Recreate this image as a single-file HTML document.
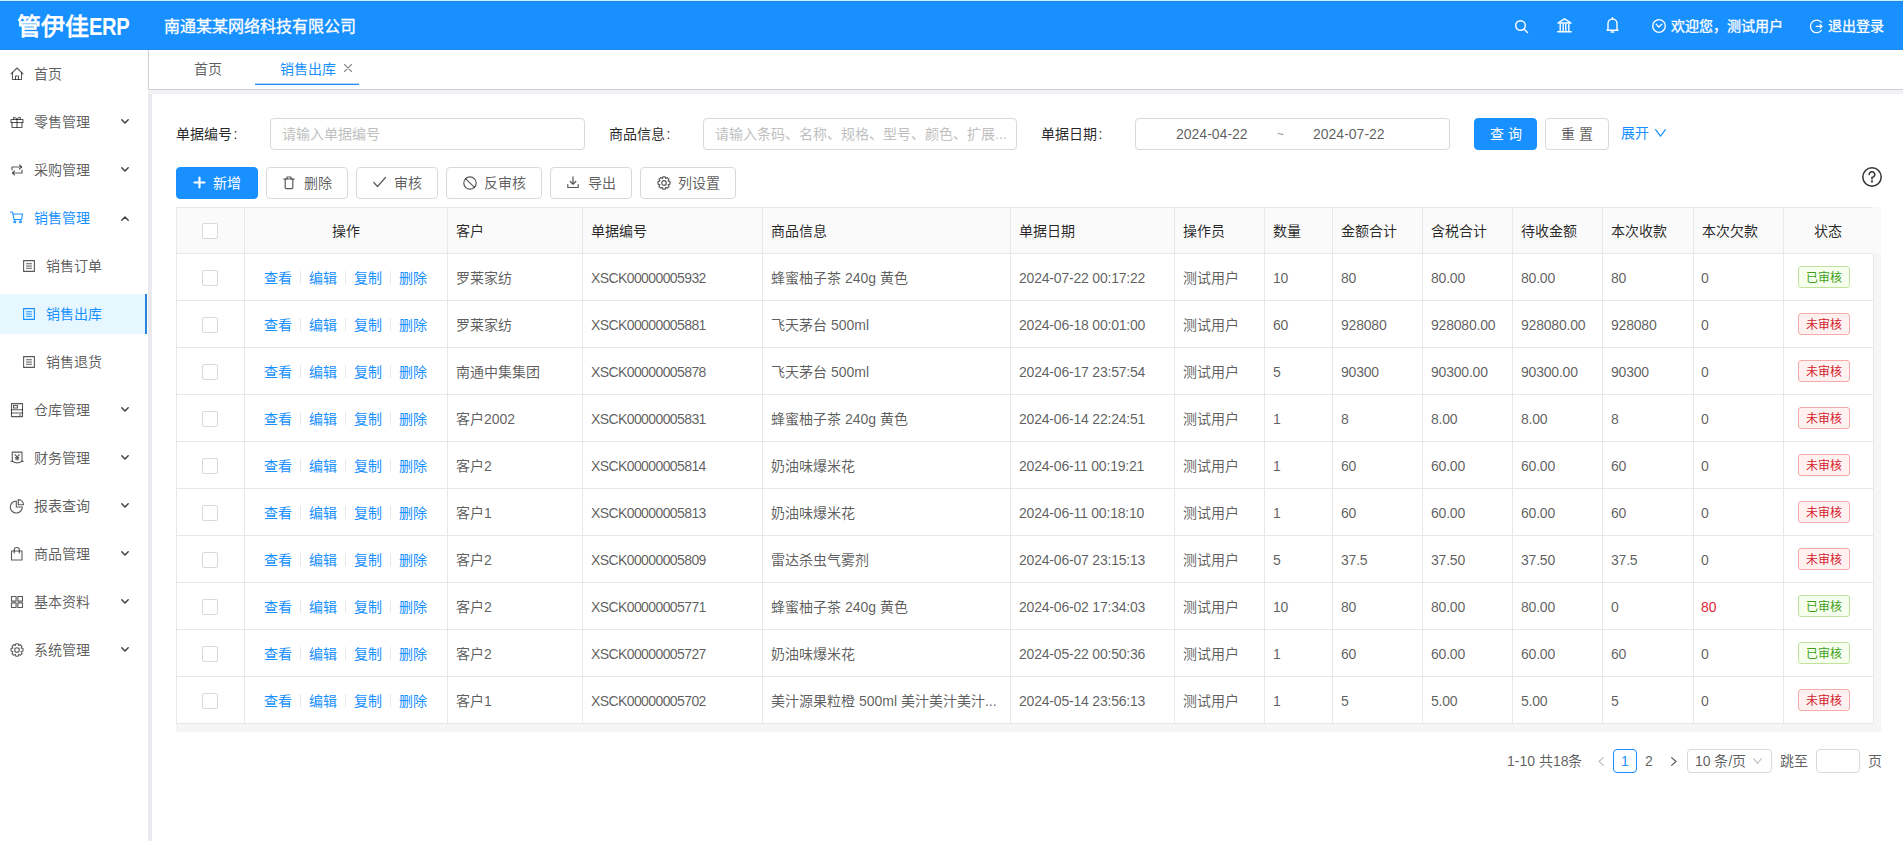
<!DOCTYPE html>
<html lang="zh-CN"><head><meta charset="utf-8"><title>管伊佳ERP</title><style>
*{margin:0;padding:0;box-sizing:border-box}
html,body{width:1903px;height:841px;overflow:hidden;background:#fff}
body{position:relative;font-family:"Liberation Sans",sans-serif;font-size:14px;color:rgba(0,0,0,.65)}
.a{position:absolute}
.t{position:absolute;white-space:nowrap;line-height:20px}
svg{position:absolute;overflow:visible}
.hdr{left:0;top:0;width:1903px;height:50px;background:#1890ff}
.side{left:0;top:50px;width:148px;height:791px;background:#fff}
.btn{position:absolute;height:32px;border:1px solid #d9d9d9;border-radius:4px;background:#fff;color:rgba(0,0,0,.65)}
.inp{position:absolute;height:32px;border:1px solid #d9d9d9;border-radius:4px;background:#fff}
.vl{position:absolute;width:1px;background:#e8e8e8}
.hl{position:absolute;height:1px;background:#e8e8e8}
.tag{position:absolute;height:22px;width:52px;border:1px solid;border-radius:3px;font-size:12px;line-height:22px;text-align:center}
.g{color:#3f9e1a;background:#f6ffed;border-color:#bfe39a}
.r{color:#d4202c;background:#fff1f0;border-color:#f3aaaa}
.lk{color:#1890ff}
</style></head><body>
<div class="a hdr"></div>
<div class="a" style="left:0;top:0;width:1903px;height:1px;background:#c4f4ff"></div>
<div class="a" style="left:0;top:1px;width:1903px;height:1px;background:#2c86dc"></div>
<div class="a" style="left:0;top:49px;width:1903px;height:1px;background:#1e8ae6"></div>
<div class="t" style="left:17px;top:16.5px;font-size:24px;color:#fff;font-weight:bold;">管伊佳<span style="display:inline-block;transform:scaleX(0.84);transform-origin:0 50%;letter-spacing:-0.5px">ERP</span></div>
<div class="t" style="left:164px;top:17.0px;font-size:16px;color:#fff;-webkit-text-stroke:0.3px #fff;">南通某某网络科技有限公司</div>
<svg style="left:1515px;top:20px;color:#fff;" width="13" height="13" viewBox="0 0 13 13" fill="none" stroke="currentColor" stroke-width="1.4" stroke-linecap="round" stroke-linejoin="round"><circle cx="5.5" cy="5.5" r="4.8"/><path d="M9 9 L12.5 12.5"/></svg>
<svg style="left:1557px;top:18px;color:#fff;" width="15" height="15" viewBox="0 0 15 15" fill="none" stroke="currentColor" stroke-width="1.4" stroke-linecap="round" stroke-linejoin="round"><path d="M1 5 L7.5 0.8 L14 5 Z"/><path d="M3.2 6.5 V12.5 M6.2 6.5 V12.5 M8.8 6.5 V12.5 M11.8 6.5 V12.5"/><path d="M0.8 13.8 H14.2"/></svg>
<svg style="left:1606px;top:17px;color:#fff;" width="13" height="16" viewBox="0 0 13 16" fill="none" stroke="currentColor" stroke-width="1.4" stroke-linecap="round" stroke-linejoin="round"><path d="M6.5 0.8 V2"/><path d="M2 13 V6.5 A4.5 4.5 0 0 1 11 6.5 V13"/><path d="M1 13.2 H12"/><path d="M5.2 15 H7.8"/></svg>
<svg style="left:1652px;top:19px;color:#fff;" width="14" height="14" viewBox="0 0 14 14" fill="none" stroke="currentColor" stroke-width="1.3" stroke-linecap="round" stroke-linejoin="round"><circle cx="7" cy="7" r="6.3"/><path d="M4.2 5.3 L6.8 8.1 L9.8 5.3"/></svg>
<div class="t" style="left:1671px;top:16.0px;font-size:14px;color:#fff;-webkit-text-stroke:0.3px #fff;">欢迎您，测试用户</div>
<svg style="left:1810px;top:20px;color:#fff;" width="13" height="13" viewBox="0 0 13 13" fill="none" stroke="currentColor" stroke-width="1.3" stroke-linecap="round" stroke-linejoin="round"><path d="M11.4 2.4 A6.2 6.2 0 1 0 11.4 10.4"/><path d="M6.2 6.4 H12 M10.2 4.7 L12 6.4 L10.2 8.1"/></svg>
<div class="t" style="left:1828px;top:16.0px;font-size:14px;color:#fff;-webkit-text-stroke:0.3px #fff;">退出登录</div>
<div class="a" style="left:0;top:294px;width:145px;height:40px;background:#e6f7ff"></div>
<div class="a" style="left:145px;top:294px;width:2px;height:40px;background:#2a84dc"></div>
<svg style="left:10px;top:67px;color:rgba(0,0,0,.65);" width="14" height="14" viewBox="0 0 14 14" fill="none" stroke="currentColor" stroke-width="1.1" stroke-linecap="round" stroke-linejoin="round"><path d="M1 6.8 L7 1 L13 6.8"/><path d="M2.5 5.5 V12.5 H11.5 V5.5"/><path d="M5.5 12.5 V9 H8.5 V12.5"/></svg>
<div class="t" style="left:34px;top:64.0px;font-size:14px;color:rgba(0,0,0,.65);">首页</div>
<svg style="left:10px;top:115px;color:rgba(0,0,0,.65);" width="14" height="14" viewBox="0 0 14 14" fill="none" stroke="currentColor" stroke-width="1.1" stroke-linecap="round" stroke-linejoin="round"><rect x="1" y="4.5" width="12" height="3" /><path d="M2 7.5 V12.5 H12 V7.5"/><path d="M7 4.5 V12.5"/><path d="M7 4.5 C5 1 2.5 2 4 4.5 M7 4.5 C9 1 11.5 2 10 4.5"/></svg>
<div class="t" style="left:34px;top:112.0px;font-size:14px;color:rgba(0,0,0,.65);">零售管理</div>
<svg style="left:121px;top:119px;color:rgba(0,0,0,.75);" width="8" height="5" viewBox="0 0 8 5" fill="none" stroke="currentColor" stroke-width="1.5" stroke-linecap="round" stroke-linejoin="round"><path d="M0.8 0.8 L4 4 L7.2 0.8"/></svg>
<svg style="left:10px;top:163px;color:rgba(0,0,0,.65);" width="14" height="14" viewBox="0 0 14 14" fill="none" stroke="currentColor" stroke-width="1.1" stroke-linecap="round" stroke-linejoin="round"><path d="M2 7 V4 H11.5"/><path d="M9.5 2 L11.5 4 L9.5 6" /><path d="M12 7 V10 H2.5"/><path d="M4.5 8 L2.5 10 L4.5 12"/></svg>
<div class="t" style="left:34px;top:160.0px;font-size:14px;color:rgba(0,0,0,.65);">采购管理</div>
<svg style="left:121px;top:167px;color:rgba(0,0,0,.75);" width="8" height="5" viewBox="0 0 8 5" fill="none" stroke="currentColor" stroke-width="1.5" stroke-linecap="round" stroke-linejoin="round"><path d="M0.8 0.8 L4 4 L7.2 0.8"/></svg>
<svg style="left:10px;top:211px;color:#1890ff;" width="14" height="14" viewBox="0 0 14 14" fill="none" stroke="currentColor" stroke-width="1.1" stroke-linecap="round" stroke-linejoin="round"><path d="M0.5 1 H2.5 L4 8.5 H11.5 L12.5 3 H3"/><circle cx="4.8" cy="10.8" r="1"/><circle cx="10.5" cy="10.8" r="1"/></svg>
<div class="t" style="left:34px;top:208.0px;font-size:14px;color:#1890ff;">销售管理</div>
<svg style="left:121px;top:215.5px;color:rgba(0,0,0,.75);" width="8" height="5" viewBox="0 0 8 5" fill="none" stroke="currentColor" stroke-width="1.5" stroke-linecap="round" stroke-linejoin="round"><path d="M0.8 4.2 L4 1 L7.2 4.2"/></svg>
<svg style="left:23px;top:260px;color:rgba(0,0,0,.65);" width="12" height="12" viewBox="0 0 12 12" fill="none" stroke="currentColor" stroke-width="1.1" stroke-linecap="round" stroke-linejoin="round"><rect x="0.6" y="0.6" width="10.8" height="10.8"/><path d="M3.5 3.8 H8.5 M3.5 6 H8.5 M3.5 8.2 H8.5"/></svg>
<div class="t" style="left:46px;top:256.0px;font-size:14px;color:rgba(0,0,0,.65);">销售订单</div>
<svg style="left:23px;top:308px;color:#1890ff;" width="12" height="12" viewBox="0 0 12 12" fill="none" stroke="currentColor" stroke-width="1.1" stroke-linecap="round" stroke-linejoin="round"><rect x="0.6" y="0.6" width="10.8" height="10.8"/><path d="M3.5 3.8 H8.5 M3.5 6 H8.5 M3.5 8.2 H8.5"/></svg>
<div class="t" style="left:46px;top:304.0px;font-size:14px;color:#1890ff;">销售出库</div>
<svg style="left:23px;top:356px;color:rgba(0,0,0,.65);" width="12" height="12" viewBox="0 0 12 12" fill="none" stroke="currentColor" stroke-width="1.1" stroke-linecap="round" stroke-linejoin="round"><rect x="0.6" y="0.6" width="10.8" height="10.8"/><path d="M3.5 3.8 H8.5 M3.5 6 H8.5 M3.5 8.2 H8.5"/></svg>
<div class="t" style="left:46px;top:352.0px;font-size:14px;color:rgba(0,0,0,.65);">销售退货</div>
<svg style="left:10px;top:403px;color:rgba(0,0,0,.65);" width="14" height="14" viewBox="0 0 14 14" fill="none" stroke="currentColor" stroke-width="1.1" stroke-linecap="round" stroke-linejoin="round"><rect x="1.5" y="0.6" width="11" height="13"/><rect x="3.5" y="2.5" width="4" height="2.5"/><path d="M1.5 6.8 H12.5 M1.5 10 H12.5"/><path d="M9.5 12 H10.8"/></svg>
<div class="t" style="left:34px;top:400.0px;font-size:14px;color:rgba(0,0,0,.65);">仓库管理</div>
<svg style="left:121px;top:407px;color:rgba(0,0,0,.75);" width="8" height="5" viewBox="0 0 8 5" fill="none" stroke="currentColor" stroke-width="1.5" stroke-linecap="round" stroke-linejoin="round"><path d="M0.8 0.8 L4 4 L7.2 0.8"/></svg>
<svg style="left:10px;top:451px;color:rgba(0,0,0,.65);" width="14" height="14" viewBox="0 0 14 14" fill="none" stroke="currentColor" stroke-width="1.1" stroke-linecap="round" stroke-linejoin="round"><path d="M2.3 10.1 V1.1 H12 V10.1"/><path d="M0.9 10.2 H2.3 Q7.2 13.6 12 10.2 H13.3"/><path d="M5 3.6 L7.15 5.9 L9.3 3.6 M7.15 5.9 V9 M5.5 6.6 H8.8 M5.5 8 H8.8"/></svg>
<div class="t" style="left:34px;top:448.0px;font-size:14px;color:rgba(0,0,0,.65);">财务管理</div>
<svg style="left:121px;top:455px;color:rgba(0,0,0,.75);" width="8" height="5" viewBox="0 0 8 5" fill="none" stroke="currentColor" stroke-width="1.5" stroke-linecap="round" stroke-linejoin="round"><path d="M0.8 0.8 L4 4 L7.2 0.8"/></svg>
<svg style="left:10px;top:499px;color:rgba(0,0,0,.65);" width="14" height="14" viewBox="0 0 14 14" fill="none" stroke="currentColor" stroke-width="1.1" stroke-linecap="round" stroke-linejoin="round"><path d="M6.3 2 A6 6 0 1 0 12.3 8 H6.3 Z"/><path d="M8.3 0.6 A5.4 5.4 0 0 1 13.5 5.8 H8.3 Z"/></svg>
<div class="t" style="left:34px;top:496.0px;font-size:14px;color:rgba(0,0,0,.65);">报表查询</div>
<svg style="left:121px;top:503px;color:rgba(0,0,0,.75);" width="8" height="5" viewBox="0 0 8 5" fill="none" stroke="currentColor" stroke-width="1.5" stroke-linecap="round" stroke-linejoin="round"><path d="M0.8 0.8 L4 4 L7.2 0.8"/></svg>
<svg style="left:10px;top:547px;color:rgba(0,0,0,.65);" width="14" height="14" viewBox="0 0 14 14" fill="none" stroke="currentColor" stroke-width="1.1" stroke-linecap="round" stroke-linejoin="round"><rect x="1.5" y="4" width="10.5" height="9"/><path d="M4.2 6 V3 A2.5 2.5 0 0 1 9.3 3 V6"/></svg>
<div class="t" style="left:34px;top:544.0px;font-size:14px;color:rgba(0,0,0,.65);">商品管理</div>
<svg style="left:121px;top:551px;color:rgba(0,0,0,.75);" width="8" height="5" viewBox="0 0 8 5" fill="none" stroke="currentColor" stroke-width="1.5" stroke-linecap="round" stroke-linejoin="round"><path d="M0.8 0.8 L4 4 L7.2 0.8"/></svg>
<svg style="left:10px;top:595px;color:rgba(0,0,0,.65);" width="14" height="14" viewBox="0 0 14 14" fill="none" stroke="currentColor" stroke-width="1.1" stroke-linecap="round" stroke-linejoin="round"><rect x="1.5" y="1.5" width="4.6" height="4.6"/><rect x="7.9" y="1.5" width="4.6" height="4.6"/><rect x="1.5" y="7.9" width="4.6" height="4.6"/><rect x="7.9" y="7.9" width="4.6" height="4.6"/></svg>
<div class="t" style="left:34px;top:592.0px;font-size:14px;color:rgba(0,0,0,.65);">基本资料</div>
<svg style="left:121px;top:599px;color:rgba(0,0,0,.75);" width="8" height="5" viewBox="0 0 8 5" fill="none" stroke="currentColor" stroke-width="1.5" stroke-linecap="round" stroke-linejoin="round"><path d="M0.8 0.8 L4 4 L7.2 0.8"/></svg>
<svg style="left:10px;top:643px;color:rgba(0,0,0,.65);" width="14" height="14" viewBox="0 0 14 14" fill="none" stroke="currentColor" stroke-width="1.1" stroke-linecap="round" stroke-linejoin="round"><circle cx="7" cy="7" r="2.3"/><path d="M5.8 0.8 H8.2 L8.7 2.5 L10.3 1.6 L12 3.3 L11.1 4.9 L13 5.6 V8.1 L11.1 8.8 L12.1 10.5 L10.4 12.2 L8.7 11.4 L8.2 13.2 H5.8 L5.3 11.4 L3.6 12.2 L1.9 10.5 L2.9 8.8 L1 8.1 V5.6 L2.9 4.9 L2 3.3 L3.7 1.6 L5.3 2.5 Z"/></svg>
<div class="t" style="left:34px;top:640.0px;font-size:14px;color:rgba(0,0,0,.65);">系统管理</div>
<svg style="left:121px;top:647px;color:rgba(0,0,0,.75);" width="8" height="5" viewBox="0 0 8 5" fill="none" stroke="currentColor" stroke-width="1.5" stroke-linecap="round" stroke-linejoin="round"><path d="M0.8 0.8 L4 4 L7.2 0.8"/></svg>
<div class="a" style="left:148px;top:50px;width:1px;height:40px;background:#d0d0d0"></div>
<div class="a" style="left:148px;top:89px;width:1755px;height:752px;background:#f0f2f5"></div>
<div class="a" style="left:148px;top:89px;width:1755px;height:1px;background:#d0d0d0"></div>
<div class="a" style="left:152px;top:94px;width:1751px;height:747px;background:#fff"></div>
<div class="a" style="left:148px;top:94px;width:4px;height:747px;background:#eaeaee"></div>
<div class="t" style="left:194px;top:59.0px;font-size:14px;color:rgba(0,0,0,.65);">首页</div>
<div class="t" style="left:280px;top:59.0px;font-size:14px;color:#1890ff;">销售出库</div>
<svg style="left:344px;top:64px;color:rgba(0,0,0,.45);" width="8" height="8" viewBox="0 0 8 8" fill="none" stroke="currentColor" stroke-width="1.1" stroke-linecap="round" stroke-linejoin="round"><path d="M0.5 0.5 L7.5 7.5 M7.5 0.5 L0.5 7.5"/></svg>
<div class="a" style="left:255px;top:84px;width:104px;height:1px;background:#2a88e8"></div>
<div class="a" style="left:255px;top:83px;width:104px;height:1px;background:rgba(24,144,255,.35)"></div>
<div class="t" style="left:176px;top:124.0px;font-size:14px;color:rgba(0,0,0,.85);">单据编号<span style="margin-left:1.5px">:</span></div>
<div class="inp" style="left:270px;top:118px;width:315px"></div>
<div class="t" style="left:282px;top:124.0px;font-size:14px;color:#bfbfbf;">请输入单据编号</div>
<div class="t" style="left:609px;top:124.0px;font-size:14px;color:rgba(0,0,0,.85);">商品信息<span style="margin-left:1.5px">:</span></div>
<div class="inp" style="left:703px;top:118px;width:314px"></div>
<div class="t" style="left:715px;top:124.0px;font-size:14px;color:#bfbfbf;">请输入条码、名称、规格、型号、颜色、扩展...</div>
<div class="t" style="left:1041px;top:124.0px;font-size:14px;color:rgba(0,0,0,.85);">单据日期<span style="margin-left:1.5px">:</span></div>
<div class="inp" style="left:1135px;top:118px;width:315px"></div>
<div class="t" style="left:1176px;top:124.0px;font-size:14px;color:rgba(0,0,0,.65);">2024-04-22</div>
<div class="t" style="left:1277px;top:124.0px;font-size:12px;color:rgba(0,0,0,.45);">~</div>
<div class="t" style="left:1313px;top:124.0px;font-size:14px;color:rgba(0,0,0,.65);">2024-07-22</div>
<div class="btn" style="left:1474px;top:118px;width:63px;background:#1890ff;border-color:#1890ff"></div>
<div class="t" style="left:1490px;top:124.0px;font-size:14px;color:#fff;">查 询</div>
<div class="btn" style="left:1545px;top:118px;width:64px"></div>
<div class="t" style="left:1561px;top:124.0px;font-size:14px;color:rgba(0,0,0,.65);">重 置</div>
<div class="t" style="left:1621px;top:123.0px;font-size:14px;color:#1890ff;">展开</div>
<svg style="left:1654.5px;top:129px;color:#1890ff;" width="11" height="8" viewBox="0 0 11 8" fill="none" stroke="currentColor" stroke-width="1.2" stroke-linecap="round" stroke-linejoin="round"><path d="M0.6 0.6 L5.5 7.2 L10.4 0.6"/></svg>
<div class="btn" style="left:176px;top:167px;width:82px;background:#1890ff;border-color:#1890ff"></div>
<svg style="left:194px;top:177px;color:#fff;" width="11" height="11" viewBox="0 0 11 11" fill="none" stroke="currentColor" stroke-width="2.1" stroke-linecap="round" stroke-linejoin="round"><path d="M5.5 0.5 V10.5 M0.5 5.5 H10.5"/></svg>
<div class="t" style="left:213px;top:173.0px;font-size:14px;color:#fff;">新增</div>
<div class="btn" style="left:266px;top:167px;width:82px"></div>
<svg style="left:283px;top:176px;color:rgba(0,0,0,.65);" width="14" height="14" viewBox="0 0 14 14" fill="none" stroke="currentColor" stroke-width="1.2" stroke-linecap="round" stroke-linejoin="round"><path d="M0.8 3 H11.2"/><path d="M4 3 V1 H8 V3"/><path d="M2.2 3 V11.5 Q2.2 12.6 3.3 12.6 H8.7 Q9.8 12.6 9.8 11.5 V3"/></svg>
<div class="t" style="left:304px;top:173.0px;font-size:14px;color:rgba(0,0,0,.65);">删除</div>
<div class="btn" style="left:356px;top:167px;width:82px"></div>
<svg style="left:373px;top:176px;color:rgba(0,0,0,.65);" width="14" height="14" viewBox="0 0 14 14" fill="none" stroke="currentColor" stroke-width="1.2" stroke-linecap="round" stroke-linejoin="round"><path d="M0.8 6.5 L4.5 10.5 L12.5 1.5"/></svg>
<div class="t" style="left:394px;top:173.0px;font-size:14px;color:rgba(0,0,0,.65);">审核</div>
<div class="btn" style="left:446px;top:167px;width:96px"></div>
<svg style="left:463px;top:176px;color:rgba(0,0,0,.65);" width="14" height="14" viewBox="0 0 14 14" fill="none" stroke="currentColor" stroke-width="1.2" stroke-linecap="round" stroke-linejoin="round"><circle cx="7" cy="7" r="6.2"/><path d="M2.6 2.6 L11.4 11.4"/></svg>
<div class="t" style="left:484px;top:173.0px;font-size:14px;color:rgba(0,0,0,.65);">反审核</div>
<div class="btn" style="left:550px;top:167px;width:82px"></div>
<svg style="left:567px;top:176px;color:rgba(0,0,0,.65);" width="14" height="14" viewBox="0 0 14 14" fill="none" stroke="currentColor" stroke-width="1.2" stroke-linecap="round" stroke-linejoin="round"><path d="M6 0.8 V8 M3.2 5.5 L6 8.2 L8.8 5.5"/><path d="M0.8 8.5 V11.5 H11.2 V8.5"/></svg>
<div class="t" style="left:588px;top:173.0px;font-size:14px;color:rgba(0,0,0,.65);">导出</div>
<div class="btn" style="left:640px;top:167px;width:96px"></div>
<svg style="left:657px;top:176px;color:rgba(0,0,0,.65);" width="14" height="14" viewBox="0 0 14 14" fill="none" stroke="currentColor" stroke-width="1.2" stroke-linecap="round" stroke-linejoin="round"><circle cx="7" cy="7" r="2.3"/><path d="M5.8 0.8 H8.2 L8.7 2.5 L10.3 1.6 L12 3.3 L11.1 4.9 L13 5.6 V8.1 L11.1 8.8 L12.1 10.5 L10.4 12.2 L8.7 11.4 L8.2 13.2 H5.8 L5.3 11.4 L3.6 12.2 L1.9 10.5 L2.9 8.8 L1 8.1 V5.6 L2.9 4.9 L2 3.3 L3.7 1.6 L5.3 2.5 Z"/></svg>
<div class="t" style="left:678px;top:173.0px;font-size:14px;color:rgba(0,0,0,.65);">列设置</div>
<svg style="left:1862px;top:167px;color:#333;" width="20" height="20" viewBox="0 0 20 20" fill="none" stroke="currentColor" stroke-width="1.5" stroke-linecap="round" stroke-linejoin="round"><circle cx="10" cy="10" r="9.2"/><path d="M7.2 7.6 A2.8 2.8 0 1 1 10 10.3 V12"/><circle cx="10" cy="14.5" r="0.4"/></svg>
<div class="a" style="left:176px;top:207px;width:1705px;height:47px;background:#fafafa"></div>
<div class="a" style="left:1873px;top:254px;width:8px;height:470px;background:#f6f6f6"></div>
<div class="a" style="left:176px;top:724px;width:1705px;height:8px;background:#f5f5f5"></div>
<div class="hl" style="left:176px;top:207px;width:1697px"></div>
<div class="hl" style="left:176px;top:253px;width:1697px"></div>
<div class="hl" style="left:176px;top:300px;width:1697px"></div>
<div class="hl" style="left:176px;top:347px;width:1697px"></div>
<div class="hl" style="left:176px;top:394px;width:1697px"></div>
<div class="hl" style="left:176px;top:441px;width:1697px"></div>
<div class="hl" style="left:176px;top:488px;width:1697px"></div>
<div class="hl" style="left:176px;top:535px;width:1697px"></div>
<div class="hl" style="left:176px;top:582px;width:1697px"></div>
<div class="hl" style="left:176px;top:629px;width:1697px"></div>
<div class="hl" style="left:176px;top:676px;width:1697px"></div>
<div class="hl" style="left:176px;top:723px;width:1697px"></div>
<div class="vl" style="left:176px;top:207px;height:517px"></div>
<div class="vl" style="left:244px;top:207px;height:517px"></div>
<div class="vl" style="left:447px;top:207px;height:517px"></div>
<div class="vl" style="left:582px;top:207px;height:517px"></div>
<div class="vl" style="left:762px;top:207px;height:517px"></div>
<div class="vl" style="left:1010px;top:207px;height:517px"></div>
<div class="vl" style="left:1174px;top:207px;height:517px"></div>
<div class="vl" style="left:1264px;top:207px;height:517px"></div>
<div class="vl" style="left:1332px;top:207px;height:517px"></div>
<div class="vl" style="left:1422px;top:207px;height:517px"></div>
<div class="vl" style="left:1512px;top:207px;height:517px"></div>
<div class="vl" style="left:1602px;top:207px;height:517px"></div>
<div class="vl" style="left:1693px;top:207px;height:517px"></div>
<div class="vl" style="left:1783px;top:207px;height:517px"></div>
<div class="vl" style="left:1873px;top:254px;height:470px"></div>
<div class="t" style="left:244px;width:203px;text-align:center;top:220.5px;color:rgba(0,0,0,.85)">操作</div>
<div class="t" style="left:456px;top:220.5px;font-size:14px;color:rgba(0,0,0,.85);">客户</div>
<div class="t" style="left:591px;top:220.5px;font-size:14px;color:rgba(0,0,0,.85);">单据编号</div>
<div class="t" style="left:771px;top:220.5px;font-size:14px;color:rgba(0,0,0,.85);">商品信息</div>
<div class="t" style="left:1019px;top:220.5px;font-size:14px;color:rgba(0,0,0,.85);">单据日期</div>
<div class="t" style="left:1183px;top:220.5px;font-size:14px;color:rgba(0,0,0,.85);">操作员</div>
<div class="t" style="left:1273px;top:220.5px;font-size:14px;color:rgba(0,0,0,.85);">数量</div>
<div class="t" style="left:1341px;top:220.5px;font-size:14px;color:rgba(0,0,0,.85);">金额合计</div>
<div class="t" style="left:1431px;top:220.5px;font-size:14px;color:rgba(0,0,0,.85);">含税合计</div>
<div class="t" style="left:1521px;top:220.5px;font-size:14px;color:rgba(0,0,0,.85);">待收金额</div>
<div class="t" style="left:1611px;top:220.5px;font-size:14px;color:rgba(0,0,0,.85);">本次收款</div>
<div class="t" style="left:1702px;top:220.5px;font-size:14px;color:rgba(0,0,0,.85);">本次欠款</div>
<div class="t" style="left:1783px;width:90px;text-align:center;top:220.5px;color:rgba(0,0,0,.85)">状态</div>
<div class="a" style="left:202px;top:223px;width:16px;height:16px;border:1px solid #d9d9d9;border-radius:2px;background:#fff"></div>
<div class="a" style="left:202px;top:270px;width:16px;height:16px;border:1px solid #d9d9d9;border-radius:2px;background:#fff"></div>
<div class="t" style="left:264px;top:268.0px;font-size:14px;color:#1890ff;">查看</div>
<div class="a" style="left:300px;top:271px;width:1px;height:13px;background:#e8e8e8"></div>
<div class="t" style="left:309px;top:268.0px;font-size:14px;color:#1890ff;">编辑</div>
<div class="a" style="left:345px;top:271px;width:1px;height:13px;background:#e8e8e8"></div>
<div class="t" style="left:354px;top:268.0px;font-size:14px;color:#1890ff;">复制</div>
<div class="a" style="left:390px;top:271px;width:1px;height:13px;background:#e8e8e8"></div>
<div class="t" style="left:399px;top:268.0px;font-size:14px;color:#1890ff;">删除</div>
<div class="t" style="left:456px;top:268.0px;font-size:14px;color:rgba(0,0,0,.65);">罗莱家纺</div>
<div class="t" style="left:591px;top:268.0px;font-size:14px;color:rgba(0,0,0,.65);letter-spacing:-0.6px;">XSCK00000005932</div>
<div class="t" style="left:771px;top:268.0px;font-size:14px;color:rgba(0,0,0,.65);">蜂蜜柚子茶 240g 黄色</div>
<div class="t" style="left:1019px;top:268.0px;font-size:14px;color:rgba(0,0,0,.65);letter-spacing:-0.2px;">2024-07-22 00:17:22</div>
<div class="t" style="left:1183px;top:268.0px;font-size:14px;color:rgba(0,0,0,.65);">测试用户</div>
<div class="t" style="left:1273px;top:268.0px;font-size:14px;color:rgba(0,0,0,.65);letter-spacing:-0.2px;">10</div>
<div class="t" style="left:1341px;top:268.0px;font-size:14px;color:rgba(0,0,0,.65);letter-spacing:-0.2px;">80</div>
<div class="t" style="left:1431px;top:268.0px;font-size:14px;color:rgba(0,0,0,.65);letter-spacing:-0.2px;">80.00</div>
<div class="t" style="left:1521px;top:268.0px;font-size:14px;color:rgba(0,0,0,.65);letter-spacing:-0.2px;">80.00</div>
<div class="t" style="left:1611px;top:268.0px;font-size:14px;color:rgba(0,0,0,.65);letter-spacing:-0.2px;">80</div>
<div class="t" style="left:1701px;top:268.0px;font-size:14px;color:rgba(0,0,0,.65);letter-spacing:-0.2px;">0</div>
<div class="tag g" style="left:1798px;top:266px">已审核</div>
<div class="a" style="left:202px;top:317px;width:16px;height:16px;border:1px solid #d9d9d9;border-radius:2px;background:#fff"></div>
<div class="t" style="left:264px;top:315.0px;font-size:14px;color:#1890ff;">查看</div>
<div class="a" style="left:300px;top:318px;width:1px;height:13px;background:#e8e8e8"></div>
<div class="t" style="left:309px;top:315.0px;font-size:14px;color:#1890ff;">编辑</div>
<div class="a" style="left:345px;top:318px;width:1px;height:13px;background:#e8e8e8"></div>
<div class="t" style="left:354px;top:315.0px;font-size:14px;color:#1890ff;">复制</div>
<div class="a" style="left:390px;top:318px;width:1px;height:13px;background:#e8e8e8"></div>
<div class="t" style="left:399px;top:315.0px;font-size:14px;color:#1890ff;">删除</div>
<div class="t" style="left:456px;top:315.0px;font-size:14px;color:rgba(0,0,0,.65);">罗莱家纺</div>
<div class="t" style="left:591px;top:315.0px;font-size:14px;color:rgba(0,0,0,.65);letter-spacing:-0.6px;">XSCK00000005881</div>
<div class="t" style="left:771px;top:315.0px;font-size:14px;color:rgba(0,0,0,.65);">飞天茅台 500ml</div>
<div class="t" style="left:1019px;top:315.0px;font-size:14px;color:rgba(0,0,0,.65);letter-spacing:-0.2px;">2024-06-18 00:01:00</div>
<div class="t" style="left:1183px;top:315.0px;font-size:14px;color:rgba(0,0,0,.65);">测试用户</div>
<div class="t" style="left:1273px;top:315.0px;font-size:14px;color:rgba(0,0,0,.65);letter-spacing:-0.2px;">60</div>
<div class="t" style="left:1341px;top:315.0px;font-size:14px;color:rgba(0,0,0,.65);letter-spacing:-0.2px;">928080</div>
<div class="t" style="left:1431px;top:315.0px;font-size:14px;color:rgba(0,0,0,.65);letter-spacing:-0.2px;">928080.00</div>
<div class="t" style="left:1521px;top:315.0px;font-size:14px;color:rgba(0,0,0,.65);letter-spacing:-0.2px;">928080.00</div>
<div class="t" style="left:1611px;top:315.0px;font-size:14px;color:rgba(0,0,0,.65);letter-spacing:-0.2px;">928080</div>
<div class="t" style="left:1701px;top:315.0px;font-size:14px;color:rgba(0,0,0,.65);letter-spacing:-0.2px;">0</div>
<div class="tag r" style="left:1798px;top:313px">未审核</div>
<div class="a" style="left:202px;top:364px;width:16px;height:16px;border:1px solid #d9d9d9;border-radius:2px;background:#fff"></div>
<div class="t" style="left:264px;top:362.0px;font-size:14px;color:#1890ff;">查看</div>
<div class="a" style="left:300px;top:365px;width:1px;height:13px;background:#e8e8e8"></div>
<div class="t" style="left:309px;top:362.0px;font-size:14px;color:#1890ff;">编辑</div>
<div class="a" style="left:345px;top:365px;width:1px;height:13px;background:#e8e8e8"></div>
<div class="t" style="left:354px;top:362.0px;font-size:14px;color:#1890ff;">复制</div>
<div class="a" style="left:390px;top:365px;width:1px;height:13px;background:#e8e8e8"></div>
<div class="t" style="left:399px;top:362.0px;font-size:14px;color:#1890ff;">删除</div>
<div class="t" style="left:456px;top:362.0px;font-size:14px;color:rgba(0,0,0,.65);">南通中集集团</div>
<div class="t" style="left:591px;top:362.0px;font-size:14px;color:rgba(0,0,0,.65);letter-spacing:-0.6px;">XSCK00000005878</div>
<div class="t" style="left:771px;top:362.0px;font-size:14px;color:rgba(0,0,0,.65);">飞天茅台 500ml</div>
<div class="t" style="left:1019px;top:362.0px;font-size:14px;color:rgba(0,0,0,.65);letter-spacing:-0.2px;">2024-06-17 23:57:54</div>
<div class="t" style="left:1183px;top:362.0px;font-size:14px;color:rgba(0,0,0,.65);">测试用户</div>
<div class="t" style="left:1273px;top:362.0px;font-size:14px;color:rgba(0,0,0,.65);letter-spacing:-0.2px;">5</div>
<div class="t" style="left:1341px;top:362.0px;font-size:14px;color:rgba(0,0,0,.65);letter-spacing:-0.2px;">90300</div>
<div class="t" style="left:1431px;top:362.0px;font-size:14px;color:rgba(0,0,0,.65);letter-spacing:-0.2px;">90300.00</div>
<div class="t" style="left:1521px;top:362.0px;font-size:14px;color:rgba(0,0,0,.65);letter-spacing:-0.2px;">90300.00</div>
<div class="t" style="left:1611px;top:362.0px;font-size:14px;color:rgba(0,0,0,.65);letter-spacing:-0.2px;">90300</div>
<div class="t" style="left:1701px;top:362.0px;font-size:14px;color:rgba(0,0,0,.65);letter-spacing:-0.2px;">0</div>
<div class="tag r" style="left:1798px;top:360px">未审核</div>
<div class="a" style="left:202px;top:411px;width:16px;height:16px;border:1px solid #d9d9d9;border-radius:2px;background:#fff"></div>
<div class="t" style="left:264px;top:409.0px;font-size:14px;color:#1890ff;">查看</div>
<div class="a" style="left:300px;top:412px;width:1px;height:13px;background:#e8e8e8"></div>
<div class="t" style="left:309px;top:409.0px;font-size:14px;color:#1890ff;">编辑</div>
<div class="a" style="left:345px;top:412px;width:1px;height:13px;background:#e8e8e8"></div>
<div class="t" style="left:354px;top:409.0px;font-size:14px;color:#1890ff;">复制</div>
<div class="a" style="left:390px;top:412px;width:1px;height:13px;background:#e8e8e8"></div>
<div class="t" style="left:399px;top:409.0px;font-size:14px;color:#1890ff;">删除</div>
<div class="t" style="left:456px;top:409.0px;font-size:14px;color:rgba(0,0,0,.65);">客户2002</div>
<div class="t" style="left:591px;top:409.0px;font-size:14px;color:rgba(0,0,0,.65);letter-spacing:-0.6px;">XSCK00000005831</div>
<div class="t" style="left:771px;top:409.0px;font-size:14px;color:rgba(0,0,0,.65);">蜂蜜柚子茶 240g 黄色</div>
<div class="t" style="left:1019px;top:409.0px;font-size:14px;color:rgba(0,0,0,.65);letter-spacing:-0.2px;">2024-06-14 22:24:51</div>
<div class="t" style="left:1183px;top:409.0px;font-size:14px;color:rgba(0,0,0,.65);">测试用户</div>
<div class="t" style="left:1273px;top:409.0px;font-size:14px;color:rgba(0,0,0,.65);letter-spacing:-0.2px;">1</div>
<div class="t" style="left:1341px;top:409.0px;font-size:14px;color:rgba(0,0,0,.65);letter-spacing:-0.2px;">8</div>
<div class="t" style="left:1431px;top:409.0px;font-size:14px;color:rgba(0,0,0,.65);letter-spacing:-0.2px;">8.00</div>
<div class="t" style="left:1521px;top:409.0px;font-size:14px;color:rgba(0,0,0,.65);letter-spacing:-0.2px;">8.00</div>
<div class="t" style="left:1611px;top:409.0px;font-size:14px;color:rgba(0,0,0,.65);letter-spacing:-0.2px;">8</div>
<div class="t" style="left:1701px;top:409.0px;font-size:14px;color:rgba(0,0,0,.65);letter-spacing:-0.2px;">0</div>
<div class="tag r" style="left:1798px;top:407px">未审核</div>
<div class="a" style="left:202px;top:458px;width:16px;height:16px;border:1px solid #d9d9d9;border-radius:2px;background:#fff"></div>
<div class="t" style="left:264px;top:456.0px;font-size:14px;color:#1890ff;">查看</div>
<div class="a" style="left:300px;top:459px;width:1px;height:13px;background:#e8e8e8"></div>
<div class="t" style="left:309px;top:456.0px;font-size:14px;color:#1890ff;">编辑</div>
<div class="a" style="left:345px;top:459px;width:1px;height:13px;background:#e8e8e8"></div>
<div class="t" style="left:354px;top:456.0px;font-size:14px;color:#1890ff;">复制</div>
<div class="a" style="left:390px;top:459px;width:1px;height:13px;background:#e8e8e8"></div>
<div class="t" style="left:399px;top:456.0px;font-size:14px;color:#1890ff;">删除</div>
<div class="t" style="left:456px;top:456.0px;font-size:14px;color:rgba(0,0,0,.65);">客户2</div>
<div class="t" style="left:591px;top:456.0px;font-size:14px;color:rgba(0,0,0,.65);letter-spacing:-0.6px;">XSCK00000005814</div>
<div class="t" style="left:771px;top:456.0px;font-size:14px;color:rgba(0,0,0,.65);">奶油味爆米花</div>
<div class="t" style="left:1019px;top:456.0px;font-size:14px;color:rgba(0,0,0,.65);letter-spacing:-0.2px;">2024-06-11 00:19:21</div>
<div class="t" style="left:1183px;top:456.0px;font-size:14px;color:rgba(0,0,0,.65);">测试用户</div>
<div class="t" style="left:1273px;top:456.0px;font-size:14px;color:rgba(0,0,0,.65);letter-spacing:-0.2px;">1</div>
<div class="t" style="left:1341px;top:456.0px;font-size:14px;color:rgba(0,0,0,.65);letter-spacing:-0.2px;">60</div>
<div class="t" style="left:1431px;top:456.0px;font-size:14px;color:rgba(0,0,0,.65);letter-spacing:-0.2px;">60.00</div>
<div class="t" style="left:1521px;top:456.0px;font-size:14px;color:rgba(0,0,0,.65);letter-spacing:-0.2px;">60.00</div>
<div class="t" style="left:1611px;top:456.0px;font-size:14px;color:rgba(0,0,0,.65);letter-spacing:-0.2px;">60</div>
<div class="t" style="left:1701px;top:456.0px;font-size:14px;color:rgba(0,0,0,.65);letter-spacing:-0.2px;">0</div>
<div class="tag r" style="left:1798px;top:454px">未审核</div>
<div class="a" style="left:202px;top:505px;width:16px;height:16px;border:1px solid #d9d9d9;border-radius:2px;background:#fff"></div>
<div class="t" style="left:264px;top:503.0px;font-size:14px;color:#1890ff;">查看</div>
<div class="a" style="left:300px;top:506px;width:1px;height:13px;background:#e8e8e8"></div>
<div class="t" style="left:309px;top:503.0px;font-size:14px;color:#1890ff;">编辑</div>
<div class="a" style="left:345px;top:506px;width:1px;height:13px;background:#e8e8e8"></div>
<div class="t" style="left:354px;top:503.0px;font-size:14px;color:#1890ff;">复制</div>
<div class="a" style="left:390px;top:506px;width:1px;height:13px;background:#e8e8e8"></div>
<div class="t" style="left:399px;top:503.0px;font-size:14px;color:#1890ff;">删除</div>
<div class="t" style="left:456px;top:503.0px;font-size:14px;color:rgba(0,0,0,.65);">客户1</div>
<div class="t" style="left:591px;top:503.0px;font-size:14px;color:rgba(0,0,0,.65);letter-spacing:-0.6px;">XSCK00000005813</div>
<div class="t" style="left:771px;top:503.0px;font-size:14px;color:rgba(0,0,0,.65);">奶油味爆米花</div>
<div class="t" style="left:1019px;top:503.0px;font-size:14px;color:rgba(0,0,0,.65);letter-spacing:-0.2px;">2024-06-11 00:18:10</div>
<div class="t" style="left:1183px;top:503.0px;font-size:14px;color:rgba(0,0,0,.65);">测试用户</div>
<div class="t" style="left:1273px;top:503.0px;font-size:14px;color:rgba(0,0,0,.65);letter-spacing:-0.2px;">1</div>
<div class="t" style="left:1341px;top:503.0px;font-size:14px;color:rgba(0,0,0,.65);letter-spacing:-0.2px;">60</div>
<div class="t" style="left:1431px;top:503.0px;font-size:14px;color:rgba(0,0,0,.65);letter-spacing:-0.2px;">60.00</div>
<div class="t" style="left:1521px;top:503.0px;font-size:14px;color:rgba(0,0,0,.65);letter-spacing:-0.2px;">60.00</div>
<div class="t" style="left:1611px;top:503.0px;font-size:14px;color:rgba(0,0,0,.65);letter-spacing:-0.2px;">60</div>
<div class="t" style="left:1701px;top:503.0px;font-size:14px;color:rgba(0,0,0,.65);letter-spacing:-0.2px;">0</div>
<div class="tag r" style="left:1798px;top:501px">未审核</div>
<div class="a" style="left:202px;top:552px;width:16px;height:16px;border:1px solid #d9d9d9;border-radius:2px;background:#fff"></div>
<div class="t" style="left:264px;top:550.0px;font-size:14px;color:#1890ff;">查看</div>
<div class="a" style="left:300px;top:553px;width:1px;height:13px;background:#e8e8e8"></div>
<div class="t" style="left:309px;top:550.0px;font-size:14px;color:#1890ff;">编辑</div>
<div class="a" style="left:345px;top:553px;width:1px;height:13px;background:#e8e8e8"></div>
<div class="t" style="left:354px;top:550.0px;font-size:14px;color:#1890ff;">复制</div>
<div class="a" style="left:390px;top:553px;width:1px;height:13px;background:#e8e8e8"></div>
<div class="t" style="left:399px;top:550.0px;font-size:14px;color:#1890ff;">删除</div>
<div class="t" style="left:456px;top:550.0px;font-size:14px;color:rgba(0,0,0,.65);">客户2</div>
<div class="t" style="left:591px;top:550.0px;font-size:14px;color:rgba(0,0,0,.65);letter-spacing:-0.6px;">XSCK00000005809</div>
<div class="t" style="left:771px;top:550.0px;font-size:14px;color:rgba(0,0,0,.65);">雷达杀虫气雾剂</div>
<div class="t" style="left:1019px;top:550.0px;font-size:14px;color:rgba(0,0,0,.65);letter-spacing:-0.2px;">2024-06-07 23:15:13</div>
<div class="t" style="left:1183px;top:550.0px;font-size:14px;color:rgba(0,0,0,.65);">测试用户</div>
<div class="t" style="left:1273px;top:550.0px;font-size:14px;color:rgba(0,0,0,.65);letter-spacing:-0.2px;">5</div>
<div class="t" style="left:1341px;top:550.0px;font-size:14px;color:rgba(0,0,0,.65);letter-spacing:-0.2px;">37.5</div>
<div class="t" style="left:1431px;top:550.0px;font-size:14px;color:rgba(0,0,0,.65);letter-spacing:-0.2px;">37.50</div>
<div class="t" style="left:1521px;top:550.0px;font-size:14px;color:rgba(0,0,0,.65);letter-spacing:-0.2px;">37.50</div>
<div class="t" style="left:1611px;top:550.0px;font-size:14px;color:rgba(0,0,0,.65);letter-spacing:-0.2px;">37.5</div>
<div class="t" style="left:1701px;top:550.0px;font-size:14px;color:rgba(0,0,0,.65);letter-spacing:-0.2px;">0</div>
<div class="tag r" style="left:1798px;top:548px">未审核</div>
<div class="a" style="left:202px;top:599px;width:16px;height:16px;border:1px solid #d9d9d9;border-radius:2px;background:#fff"></div>
<div class="t" style="left:264px;top:597.0px;font-size:14px;color:#1890ff;">查看</div>
<div class="a" style="left:300px;top:600px;width:1px;height:13px;background:#e8e8e8"></div>
<div class="t" style="left:309px;top:597.0px;font-size:14px;color:#1890ff;">编辑</div>
<div class="a" style="left:345px;top:600px;width:1px;height:13px;background:#e8e8e8"></div>
<div class="t" style="left:354px;top:597.0px;font-size:14px;color:#1890ff;">复制</div>
<div class="a" style="left:390px;top:600px;width:1px;height:13px;background:#e8e8e8"></div>
<div class="t" style="left:399px;top:597.0px;font-size:14px;color:#1890ff;">删除</div>
<div class="t" style="left:456px;top:597.0px;font-size:14px;color:rgba(0,0,0,.65);">客户2</div>
<div class="t" style="left:591px;top:597.0px;font-size:14px;color:rgba(0,0,0,.65);letter-spacing:-0.6px;">XSCK00000005771</div>
<div class="t" style="left:771px;top:597.0px;font-size:14px;color:rgba(0,0,0,.65);">蜂蜜柚子茶 240g 黄色</div>
<div class="t" style="left:1019px;top:597.0px;font-size:14px;color:rgba(0,0,0,.65);letter-spacing:-0.2px;">2024-06-02 17:34:03</div>
<div class="t" style="left:1183px;top:597.0px;font-size:14px;color:rgba(0,0,0,.65);">测试用户</div>
<div class="t" style="left:1273px;top:597.0px;font-size:14px;color:rgba(0,0,0,.65);letter-spacing:-0.2px;">10</div>
<div class="t" style="left:1341px;top:597.0px;font-size:14px;color:rgba(0,0,0,.65);letter-spacing:-0.2px;">80</div>
<div class="t" style="left:1431px;top:597.0px;font-size:14px;color:rgba(0,0,0,.65);letter-spacing:-0.2px;">80.00</div>
<div class="t" style="left:1521px;top:597.0px;font-size:14px;color:rgba(0,0,0,.65);letter-spacing:-0.2px;">80.00</div>
<div class="t" style="left:1611px;top:597.0px;font-size:14px;color:rgba(0,0,0,.65);letter-spacing:-0.2px;">0</div>
<div class="t" style="left:1701px;top:597.0px;font-size:14px;color:rgba(0,0,0,.65);"><span style="color:#e02a35">80</span></div>
<div class="tag g" style="left:1798px;top:595px">已审核</div>
<div class="a" style="left:202px;top:646px;width:16px;height:16px;border:1px solid #d9d9d9;border-radius:2px;background:#fff"></div>
<div class="t" style="left:264px;top:644.0px;font-size:14px;color:#1890ff;">查看</div>
<div class="a" style="left:300px;top:647px;width:1px;height:13px;background:#e8e8e8"></div>
<div class="t" style="left:309px;top:644.0px;font-size:14px;color:#1890ff;">编辑</div>
<div class="a" style="left:345px;top:647px;width:1px;height:13px;background:#e8e8e8"></div>
<div class="t" style="left:354px;top:644.0px;font-size:14px;color:#1890ff;">复制</div>
<div class="a" style="left:390px;top:647px;width:1px;height:13px;background:#e8e8e8"></div>
<div class="t" style="left:399px;top:644.0px;font-size:14px;color:#1890ff;">删除</div>
<div class="t" style="left:456px;top:644.0px;font-size:14px;color:rgba(0,0,0,.65);">客户2</div>
<div class="t" style="left:591px;top:644.0px;font-size:14px;color:rgba(0,0,0,.65);letter-spacing:-0.6px;">XSCK00000005727</div>
<div class="t" style="left:771px;top:644.0px;font-size:14px;color:rgba(0,0,0,.65);">奶油味爆米花</div>
<div class="t" style="left:1019px;top:644.0px;font-size:14px;color:rgba(0,0,0,.65);letter-spacing:-0.2px;">2024-05-22 00:50:36</div>
<div class="t" style="left:1183px;top:644.0px;font-size:14px;color:rgba(0,0,0,.65);">测试用户</div>
<div class="t" style="left:1273px;top:644.0px;font-size:14px;color:rgba(0,0,0,.65);letter-spacing:-0.2px;">1</div>
<div class="t" style="left:1341px;top:644.0px;font-size:14px;color:rgba(0,0,0,.65);letter-spacing:-0.2px;">60</div>
<div class="t" style="left:1431px;top:644.0px;font-size:14px;color:rgba(0,0,0,.65);letter-spacing:-0.2px;">60.00</div>
<div class="t" style="left:1521px;top:644.0px;font-size:14px;color:rgba(0,0,0,.65);letter-spacing:-0.2px;">60.00</div>
<div class="t" style="left:1611px;top:644.0px;font-size:14px;color:rgba(0,0,0,.65);letter-spacing:-0.2px;">60</div>
<div class="t" style="left:1701px;top:644.0px;font-size:14px;color:rgba(0,0,0,.65);letter-spacing:-0.2px;">0</div>
<div class="tag g" style="left:1798px;top:642px">已审核</div>
<div class="a" style="left:202px;top:693px;width:16px;height:16px;border:1px solid #d9d9d9;border-radius:2px;background:#fff"></div>
<div class="t" style="left:264px;top:691.0px;font-size:14px;color:#1890ff;">查看</div>
<div class="a" style="left:300px;top:694px;width:1px;height:13px;background:#e8e8e8"></div>
<div class="t" style="left:309px;top:691.0px;font-size:14px;color:#1890ff;">编辑</div>
<div class="a" style="left:345px;top:694px;width:1px;height:13px;background:#e8e8e8"></div>
<div class="t" style="left:354px;top:691.0px;font-size:14px;color:#1890ff;">复制</div>
<div class="a" style="left:390px;top:694px;width:1px;height:13px;background:#e8e8e8"></div>
<div class="t" style="left:399px;top:691.0px;font-size:14px;color:#1890ff;">删除</div>
<div class="t" style="left:456px;top:691.0px;font-size:14px;color:rgba(0,0,0,.65);">客户1</div>
<div class="t" style="left:591px;top:691.0px;font-size:14px;color:rgba(0,0,0,.65);letter-spacing:-0.6px;">XSCK00000005702</div>
<div class="t" style="left:771px;top:691.0px;font-size:14px;color:rgba(0,0,0,.65);">美汁源果粒橙 500ml 美汁美汁美汁...</div>
<div class="t" style="left:1019px;top:691.0px;font-size:14px;color:rgba(0,0,0,.65);letter-spacing:-0.2px;">2024-05-14 23:56:13</div>
<div class="t" style="left:1183px;top:691.0px;font-size:14px;color:rgba(0,0,0,.65);">测试用户</div>
<div class="t" style="left:1273px;top:691.0px;font-size:14px;color:rgba(0,0,0,.65);letter-spacing:-0.2px;">1</div>
<div class="t" style="left:1341px;top:691.0px;font-size:14px;color:rgba(0,0,0,.65);letter-spacing:-0.2px;">5</div>
<div class="t" style="left:1431px;top:691.0px;font-size:14px;color:rgba(0,0,0,.65);letter-spacing:-0.2px;">5.00</div>
<div class="t" style="left:1521px;top:691.0px;font-size:14px;color:rgba(0,0,0,.65);letter-spacing:-0.2px;">5.00</div>
<div class="t" style="left:1611px;top:691.0px;font-size:14px;color:rgba(0,0,0,.65);letter-spacing:-0.2px;">5</div>
<div class="t" style="left:1701px;top:691.0px;font-size:14px;color:rgba(0,0,0,.65);letter-spacing:-0.2px;">0</div>
<div class="tag r" style="left:1798px;top:689px">未审核</div>
<div class="t" style="left:1507px;top:751.0px;font-size:14px;color:rgba(0,0,0,.65);">1-10 共18条</div>
<svg style="left:1598px;top:757px;color:rgba(0,0,0,.25);" width="6" height="9" viewBox="0 0 6 9" fill="none" stroke="currentColor" stroke-width="1.2" stroke-linecap="round" stroke-linejoin="round"><path d="M5.4 0.6 L1 4.5 L5.4 8.4"/></svg>
<div class="a" style="left:1613px;top:749px;width:24px;height:24px;border:1px solid #1890ff;border-radius:4px;text-align:center;line-height:22px;color:#1890ff">1</div>
<div class="t" style="left:1645px;top:751.0px;font-size:14px;color:rgba(0,0,0,.65);">2</div>
<svg style="left:1670.5px;top:757px;color:rgba(0,0,0,.65);" width="6" height="9" viewBox="0 0 6 9" fill="none" stroke="currentColor" stroke-width="1.2" stroke-linecap="round" stroke-linejoin="round"><path d="M0.6 0.6 L5 4.5 L0.6 8.4"/></svg>
<div class="inp" style="left:1687px;top:749px;width:85px;height:24px"></div>
<div class="t" style="left:1695px;top:751.0px;font-size:14px;color:rgba(0,0,0,.65);">10 条/页</div>
<svg style="left:1752.5px;top:758px;color:rgba(0,0,0,.25);" width="9" height="6" viewBox="0 0 9 6" fill="none" stroke="currentColor" stroke-width="1.1" stroke-linecap="round" stroke-linejoin="round"><path d="M0.6 0.6 L4.5 5.4 L8.4 0.6"/></svg>
<div class="t" style="left:1780px;top:751.0px;font-size:14px;color:rgba(0,0,0,.65);">跳至</div>
<div class="inp" style="left:1816px;top:749px;width:44px;height:24px"></div>
<div class="t" style="left:1868px;top:751.0px;font-size:14px;color:rgba(0,0,0,.65);">页</div>
</body></html>
